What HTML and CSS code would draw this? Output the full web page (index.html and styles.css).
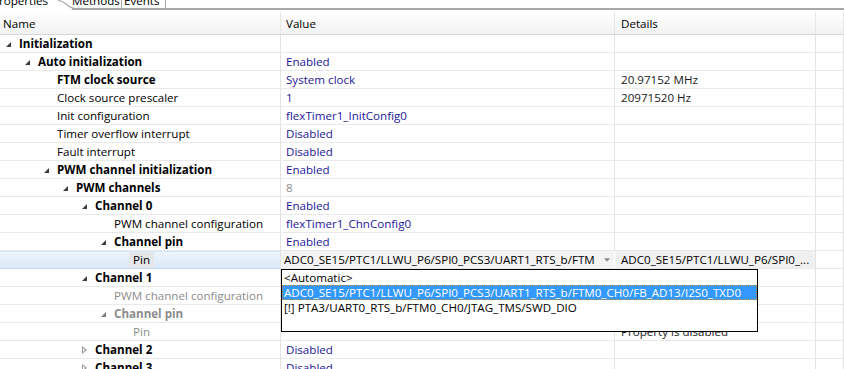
FILE: index.html
```html
<!DOCTYPE html>
<html lang="en">
<head>
<meta charset="utf-8"/>
<title>Component Inspector</title>
<link rel="stylesheet" href="styles.css">
</head>
<body>
<div class="tabs">
  <div class="tab tab-active"><span>Properties</span></div>
  <svg class="tab-curve" width="20" height="10" viewBox="0 0 20 10"><path d="M0 0.5 C8 0.5 9 9 20 9" fill="none" stroke="#a8a8a8" stroke-width="1.2"/></svg>
  <div class="tab tab-methods"><span>Methods</span></div>
  <div class="tab tab-events"><span>Events</span></div>
  <div class="tab-rest"></div>
</div>

<div class="tree">
  <div class="row head">
    <div class="cell name">Name</div>
    <div class="cell value">Value</div>
    <div class="cell details">Details</div>
    <div class="cell extra"></div>
  </div>

  <div class="row">
    <div class="cell name lvl0"><span class="tg open"></span><b>Initialization</b></div>
    <div class="cell value"></div><div class="cell details"></div><div class="cell extra"></div>
  </div>
  <div class="row">
    <div class="cell name lvl1"><span class="tg open"></span><b>Auto initialization</b></div>
    <div class="cell value">Enabled</div><div class="cell details"></div><div class="cell extra"></div>
  </div>
  <div class="row">
    <div class="cell name lvl2"><span class="tg"></span><b>FTM clock source</b></div>
    <div class="cell value">System clock</div><div class="cell details">20.97152 MHz</div><div class="cell extra"></div>
  </div>
  <div class="row">
    <div class="cell name lvl2"><span class="tg"></span>Clock source prescaler</div>
    <div class="cell value">1</div><div class="cell details">20971520 Hz</div><div class="cell extra"></div>
  </div>
  <div class="row">
    <div class="cell name lvl2"><span class="tg"></span>Init configuration</div>
    <div class="cell value">flexTimer1_InitConfig0</div><div class="cell details"></div><div class="cell extra"></div>
  </div>
  <div class="row">
    <div class="cell name lvl2"><span class="tg"></span>Timer overflow interrupt</div>
    <div class="cell value">Disabled</div><div class="cell details"></div><div class="cell extra"></div>
  </div>
  <div class="row">
    <div class="cell name lvl2"><span class="tg"></span>Fault interrupt</div>
    <div class="cell value">Disabled</div><div class="cell details"></div><div class="cell extra"></div>
  </div>
  <div class="row">
    <div class="cell name lvl1x"><span class="tg open"></span><b>PWM channel initialization</b></div>
    <div class="cell value">Enabled</div><div class="cell details"></div><div class="cell extra"></div>
  </div>
  <div class="row">
    <div class="cell name lvl2x"><span class="tg open"></span><b>PWM channels</b></div>
    <div class="cell value muted">8</div><div class="cell details"></div><div class="cell extra"></div>
  </div>
  <div class="row">
    <div class="cell name lvl3x"><span class="tg open"></span><b>Channel 0</b></div>
    <div class="cell value">Enabled</div><div class="cell details"></div><div class="cell extra"></div>
  </div>
  <div class="row">
    <div class="cell name lvl5"><span class="tg"></span>PWM channel configuration</div>
    <div class="cell value">flexTimer1_ChnConfig0</div><div class="cell details"></div><div class="cell extra"></div>
  </div>
  <div class="row">
    <div class="cell name lvl4x"><span class="tg open"></span><b>Channel pin</b></div>
    <div class="cell value">Enabled</div><div class="cell details"></div><div class="cell extra"></div>
  </div>
  <div class="row row-sel">
    <div class="cell name lvl6"><span class="tg"></span><span class="pin-label">Pin</span></div>
    <div class="cell value combo"><span class="combo-text">ADC0_SE15/PTC1/LLWU_P6/SPI0_PCS3/UART1_RTS_b/FTM</span><svg class="combo-arrow" width="7" height="4" viewBox="0 0 7 4"><path d="M0 0 H7 L3.5 4 Z" fill="#8a8a8a"/></svg></div>
    <div class="cell details sel-details">ADC0_SE15/PTC1/LLWU_P6/SPI0_...</div><div class="cell extra"></div>
  </div>
  <div class="row">
    <div class="cell name lvl3x"><span class="tg open"></span><b>Channel 1</b></div>
    <div class="cell value"></div><div class="cell details"></div><div class="cell extra"></div>
  </div>
  <div class="row off">
    <div class="cell name lvl5"><span class="tg"></span>PWM channel configuration</div>
    <div class="cell value"></div><div class="cell details"></div><div class="cell extra"></div>
  </div>
  <div class="row off">
    <div class="cell name lvl4x"><span class="tg open"></span><b>Channel pin</b></div>
    <div class="cell value"></div><div class="cell details"></div><div class="cell extra"></div>
  </div>
  <div class="row off">
    <div class="cell name lvl6"><span class="tg"></span>Pin</div>
    <div class="cell value"></div><div class="cell details plain">Property is disabled</div><div class="cell extra"></div>
  </div>
  <div class="row">
    <div class="cell name lvl3x"><span class="tg closed"></span><b>Channel 2</b></div>
    <div class="cell value">Disabled</div><div class="cell details"></div><div class="cell extra"></div>
  </div>
  <div class="row">
    <div class="cell name lvl3x"><span class="tg closed"></span><b>Channel 3</b></div>
    <div class="cell value">Disabled</div><div class="cell details"></div><div class="cell extra"></div>
  </div>

  <!-- open list of the Pin combo -->
  <div class="dropdown">
    <div class="opt">&lt;Automatic&gt;</div>
    <div class="opt opt-sel">ADC0_SE15/PTC1/LLWU_P6/SPI0_PCS3/UART1_RTS_b/FTM0_CH0/FB_AD13/I2S0_TXD0</div>
    <div class="opt">[!] PTA3/UART0_RTS_b/FTM0_CH0/JTAG_TMS/SWD_DIO</div>
  </div>
</div>
</body>
</html>
```

FILE: styles.css
```css
body {
    margin: 0;
    background: #fff;
    font-family: "Open Sans", "Noto Sans", sans-serif;
    font-size: 11.6px;
    color: #000;
    overflow: hidden;
}

/* tab strip, only its lower edge is visible */
.tabs {
    display: flex;
    height: 10px;
    overflow: hidden;
}
.tab {
    flex: none;
    height: 10px;
    line-height: 12px;
    white-space: nowrap;
    border-bottom: 2px solid #a8a8a8;
    box-sizing: border-box;
    overflow: hidden;
}
.tab span {
    display: block;
    margin-top: -5px;
}
.tab-active {
    border-bottom: none;
    width: 58px;
}
.tab-active span {
    margin-left: -8px;
}
.tab-curve {
    flex: none;
}
.tab-methods {
    margin-left: -6px;
    width: 50px;
    border-right: 1px solid #a8a8a8;
}
.tab-events {
    padding-left: 2px;
    width: 44px;
    border-right: 1px solid #a8a8a8;
}
.tab-rest {
    flex: 1;
    border-bottom: 2px solid #a8a8a8;
    box-sizing: border-box;
    height: 10px;
}

.tree {
    position: relative;
    margin-top: 2px;
}
.row {
    display: grid;
    grid-template-columns: 281px 334px 201px 1fr;
    height: 18px;
}
.cell {
    box-sizing: border-box;
    height: 18px;
    padding-top: 1px;
    line-height: 16px;
    border-right: 1px solid #e3e3e3;
    border-bottom: 1px solid #e9e9e9;
    white-space: nowrap;
    overflow: hidden;
    display: flex;
    align-items: center;
}
.value {
    padding-left: 5px;
    color: #23179a;
}
.value.muted {
    color: #8c8c8c;
}
.details {
    padding-left: 6px;
    color: #1a1a1a;
}

.head {
    height: 23px;
    background: linear-gradient(#ffffff, #f1f1f1);
}
.head .cell {
    height: 23px;
    color: #000;
    border-bottom: 1px solid #d5d5d5;
    border-right-color: #e6e6e6;
}
.head .name {
    padding-left: 3px;
}

/* indentation of tree levels */
.lvl0 { padding-left: 0; }
.lvl1 { padding-left: 19px; }
.lvl2, .lvl1x { padding-left: 38px; }
.lvl2x { padding-left: 57px; }
.lvl3x { padding-left: 76px; }
.lvl4x, .lvl5 { padding-left: 95px; }
.lvl6 { padding-left: 114px; }

.tg {
    flex: none;
    width: 19px;
    height: 16px;
    position: relative;
}
.tg.open::before {
    content: "";
    position: absolute;
    left: 6px;
    top: 6px;
    width: 0;
    height: 0;
    border-left: 5px solid transparent;
    border-bottom: 5px solid #3c3c3c;
}
.tg.closed::before {
    content: "";
    position: absolute;
    left: 6px;
    top: 4px;
    width: 0;
    height: 0;
    border-top: 4px solid transparent;
    border-bottom: 4px solid transparent;
    border-left: 5px solid #9a9a9a;
}
.tg.closed::after {
    content: "";
    position: absolute;
    left: 7px;
    top: 6px;
    width: 0;
    height: 0;
    border-top: 2px solid transparent;
    border-bottom: 2px solid transparent;
    border-left: 2.5px solid #fff;
}

.off .name {
    color: #8c8c8c;
}
.off .tg.open::before {
    border-bottom-color: #7a7a7a;
}
.plain {
    color: #1a1a1a;
}

/* selected Pin row */
.row-sel .name {
    background: linear-gradient(#eef5fd, #d9e8f8);
    border-bottom-color: #c9dcf1;
    border-top: 1px solid #d6e6f7;
    padding-top: 0;
}
.pin-label {
    background: #e4e6e9;
    padding: 0 4px;
    margin-left: -4px;
    line-height: 16px;
}
.combo {
    background: #f3f3f3;
    color: #000;
    padding-left: 3px;
    padding-right: 4px;
    border-right: 1px solid #fff;
}
.combo-text {
    width: 313px;
    overflow: hidden;
    flex: none;
}
.combo-arrow {
    margin-left: 7px;
}
.sel-details {
    background: #f0f0f0;
    color: #000;
}

.dropdown {
    position: absolute;
    left: 281px;
    top: 257px;
    width: 477px;
    height: 63px;
    box-sizing: border-box;
    border: 1px solid #000;
    background: #fff;
}
.opt {
    height: 15px;
    line-height: 15px;
    padding-left: 2px;
    white-space: nowrap;
}
.opt-sel {
    background: #3399ff;
    color: #fff;
    outline: 1px dotted #c98a3a;
    outline-offset: -1px;
}
```
